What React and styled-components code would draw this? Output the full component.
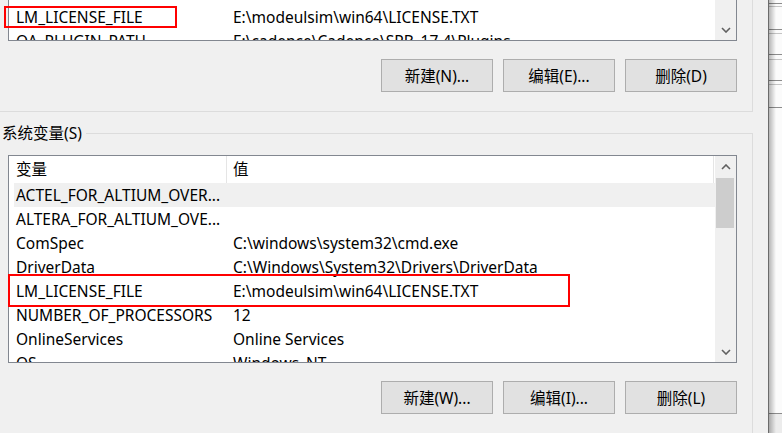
import React from 'react';
import styled, { createGlobalStyle } from 'styled-components';

const GlobalStyle = createGlobalStyle`
  html, body {
    margin: 0;
    padding: 0;
    background: #f0f0f0;
  }
  body {
    font-family: "Noto Sans", "Noto Sans CJK SC", sans-serif;
    font-size: 15.5px;
    color: #000;
  }
`;

const Screen = styled.div`
  display: flex;
  width: 782px;
  height: 433px;
  overflow: hidden;
  background: #f0f0f0;
`;

const Dialog = styled.div`
  width: 768px;
  flex: none;
  display: flex;
  flex-direction: column;
`;

// window behind the dialog, peeking out on the right
const BackWindow = styled.div`
  flex: 1;
  border-left: 1px solid #6b6b6b;
  background:
    linear-gradient(to right, rgba(0, 0, 0, 0.28), rgba(0, 0, 0, 0) 7px),
    linear-gradient(#8c8c8c, #8c8c8c) 0 3px / 100% 1px no-repeat,
    linear-gradient(#c4c4c4, #c4c4c4) 0 6px / 100% 1px no-repeat,
    linear-gradient(#8c8c8c, #8c8c8c) 0 29px / 100% 1px no-repeat,
    linear-gradient(#c4c4c4, #c4c4c4) 0 33px / 100% 1px no-repeat,
    linear-gradient(#8c8c8c, #8c8c8c) 0 54px / 100% 1px no-repeat,
    linear-gradient(#c4c4c4, #c4c4c4) 0 59px / 100% 1px no-repeat,
    linear-gradient(#8c8c8c, #8c8c8c) 0 80px / 100% 1px no-repeat,
    linear-gradient(#c4c4c4, #c4c4c4) 0 84px / 100% 1px no-repeat,
    linear-gradient(#8c8c8c, #8c8c8c) 0 107px / 100% 1px no-repeat,
    linear-gradient(#8c8c8c, #8c8c8c) 0 413px / 100% 1px no-repeat,
    linear-gradient(#ececec, #ececec) 0 414px / 100% 19px no-repeat,
    #fbfbfb;
`;

const UserGroup = styled.div`
  position: relative;
  width: 753px;
  height: 112px;
  box-sizing: border-box;
  border-right: 1px solid #dcdcdc;
  border-bottom: 1px solid #dcdcdc;
  display: flex;
  flex-direction: column;
`;

const SystemGroup = styled.div`
  width: 753px;
  margin-top: 11px;
  flex: 1;
  display: flex;
  flex-direction: column;
`;

const GroupHead = styled.div`
  display: flex;
  height: 20px;
`;

const GroupLabel = styled.div`
  padding-left: 2px;
  line-height: 20px;
  white-space: nowrap;
`;

const HeadLine = styled.div`
  flex: 1;
  margin: 10px 0 0 4px;
  border-top: 1px solid #dcdcdc;
  border-right: 1px solid #dcdcdc;
`;

const GroupBody = styled.div`
  flex: 1;
  border-right: 1px solid #dcdcdc;
  display: flex;
  flex-direction: column;
  padding-top: 12px;
`;

const ListBox = styled.div`
  position: relative;
  margin-left: 8px;
  width: 729px;
  height: ${p => p.$h}px;
  box-sizing: border-box;
  border: 1px solid #828790;
  border-top-width: ${p => (p.$open ? 0 : 1)}px;
  background: #fff;
  display: flex;
`;

const RowsArea = styled.div`
  flex: 1;
  overflow: hidden;
  padding-left: 5px;
`;

const HeaderRow = styled.div`
  display: grid;
  grid-template-columns: 213px 1fr;
  height: 27px;
  margin-left: -5px;
  padding-left: 5px;
  border-right: 1px solid #e5e5e5;
  margin-right: 1px;
`;

const HeadCell = styled.div`
  line-height: 27px;
  padding-left: ${p => (p.$first ? 2 : 6)}px;
  border-right: ${p => (p.$first ? '1px solid #e5e5e5' : 'none')};
`;

const Row = styled.div`
  display: grid;
  grid-template-columns: 213px 1fr;
  height: 24px;
  line-height: 24px;
  white-space: nowrap;
  background: ${p => (p.$hover ? '#f0f0f0' : 'transparent')};
  margin-top: ${p => p.$shift || 0}px;
`;

const Cell = styled.div`
  padding-left: ${p => (p.$first ? 2 : 6)}px;
  overflow: hidden;
`;

const Scrollbar = styled.div`
  width: 21px;
  flex: none;
  background: #f0f0f0;
  display: flex;
  flex-direction: column;
`;

const ArrowBtn = styled.div`
  height: 21px;
  flex: none;
  display: flex;
  align-items: center;
  justify-content: center;
`;

const Track = styled.div`
  flex: 1;
`;

const Thumb = styled.div`
  height: 50px;
  margin: 1px 2px 0 1px;
  background: #cdcdcd;
`;

const Buttons = styled.div`
  display: flex;
  justify-content: flex-end;
  gap: 10px;
  padding-right: 15px;
  margin-top: 18px;
`;

const Button = styled.button`
  width: 112px;
  height: 33px;
  box-sizing: border-box;
  background: #e1e1e1;
  border: 1px solid #adadad;
  font: inherit;
  color: #000;
  padding: 0;
`;

const Mark = styled.div`
  position: absolute;
  left: ${p => p.$x}px;
  top: ${p => p.$y}px;
  width: ${p => p.$w}px;
  height: ${p => p.$h}px;
  box-sizing: border-box;
  border: 2px solid #ff0000;
  pointer-events: none;
`;

const Chevron = ({ up }) => (
  <svg width="10" height="6" viewBox="0 0 10 6">
    <polyline
      points={up ? '1,5 5,1 9,5' : '1,1 5,5 9,1'}
      fill="none"
      stroke="#606060"
      strokeWidth="1.6"
    />
  </svg>
);

const userRows = [
  ['LM_LICENSE_FILE', 'E:\\modeulsim\\win64\\LICENSE.TXT'],
  ['OA_PLUGIN_PATH', 'E:\\cadence\\Cadence\\SPB_17.4\\Plugins'],
];

const sysRows = [
  ['ACTEL_FOR_ALTIUM_OVER...', ''],
  ['ALTERA_FOR_ALTIUM_OVE...', ''],
  ['ComSpec', 'C:\\windows\\system32\\cmd.exe'],
  ['DriverData', 'C:\\Windows\\System32\\Drivers\\DriverData'],
  ['LM_LICENSE_FILE', 'E:\\modeulsim\\win64\\LICENSE.TXT'],
  ['NUMBER_OF_PROCESSORS', '12'],
  ['OnlineServices', 'Online Services'],
  ['OS', 'Windows_NT'],
];

export default function App() {
  return (
    <>
      <GlobalStyle />
      <Screen>
        <Dialog>
          <UserGroup>
            <ListBox $h={41} $open>
              <RowsArea>
                {userRows.map(([name, value], i) => (
                  <Row key={name} $shift={i === 0 ? 5 : 0}>
                    <Cell $first>{name}</Cell>
                    <Cell>{value}</Cell>
                  </Row>
                ))}
              </RowsArea>
              <Scrollbar>
                <Track />
                <ArrowBtn>
                  <Chevron />
                </ArrowBtn>
              </Scrollbar>
            </ListBox>
            <Buttons>
              <Button>新建(N)...</Button>
              <Button>编辑(E)...</Button>
              <Button>删除(D)</Button>
            </Buttons>
            <Mark $x={4} $y={6} $w={173} $h={22} />
          </UserGroup>

          <SystemGroup>
            <GroupHead>
              <GroupLabel>系统变量(S)</GroupLabel>
              <HeadLine />
            </GroupHead>
            <GroupBody>
              <ListBox $h={208}>
                <RowsArea>
                  <HeaderRow>
                    <HeadCell $first>变量</HeadCell>
                    <HeadCell>值</HeadCell>
                  </HeaderRow>
                  {sysRows.map(([name, value], i) => (
                    <Row key={name} $hover={i === 0}>
                      <Cell $first>{name}</Cell>
                      <Cell>{value}</Cell>
                    </Row>
                  ))}
                </RowsArea>
                <Scrollbar>
                  <ArrowBtn>
                    <Chevron up />
                  </ArrowBtn>
                  <Thumb />
                  <Track />
                  <ArrowBtn>
                    <Chevron />
                  </ArrowBtn>
                </Scrollbar>
                <Mark $x={-1} $y={118} $w={562} $h={33} />
              </ListBox>
              <Buttons>
                <Button>新建(W)...</Button>
                <Button>编辑(I)...</Button>
                <Button>删除(L)</Button>
              </Buttons>
            </GroupBody>
          </SystemGroup>
        </Dialog>
        <BackWindow />
      </Screen>
    </>
  );
}
